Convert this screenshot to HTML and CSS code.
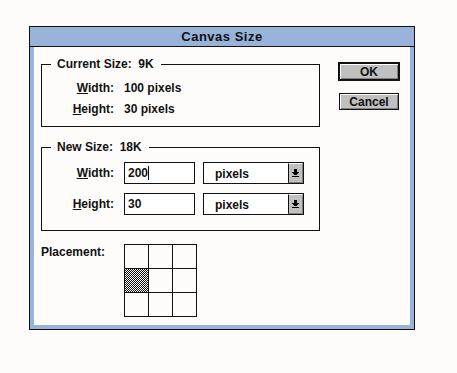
FILE: index.html
```html
<!DOCTYPE html>
<html lang="en">
<head>
    <meta charset="UTF-8">
    <title>Canvas Size</title>
    <link rel="stylesheet" href="styles.css">
</head>
<body>
<div class="window">
    <div class="titlebar">Canvas Size</div>
    <div class="client">
        <div class="left">
            <fieldset class="group current">
                <legend>Current Size:&nbsp;&nbsp;9K</legend>
                <div class="rows">
                    <span class="label"><u>W</u>idth:</span>
                    <span class="value">100 pixels</span>
                    <span class="label"><u>H</u>eight:</span>
                    <span class="value">30 pixels</span>
                </div>
            </fieldset>
            <fieldset class="group newsize">
                <legend>New Size:&nbsp;&nbsp;18K</legend>
                <div class="rows">
                    <span class="label"><u>W</u>idth:</span>
                    <div class="field"><span class="caret">200</span></div>
                    <div class="combo">
                        <span class="combo-text">pixels</span>
                        <span class="combo-btn">
                            <svg width="9" height="9" viewBox="0 0 9 9">
                                <path d="M3 0h3v3h2v1h-1v1h-1v1h-3v-1h-1v-1h-1v-1h2z" fill="#000"/>
                                <rect x="1" y="7" width="7" height="1" fill="#000"/>
                            </svg>
                        </span>
                    </div>
                    <span class="label"><u>H</u>eight:</span>
                    <div class="field">30</div>
                    <div class="combo">
                        <span class="combo-text">pixels</span>
                        <span class="combo-btn">
                            <svg width="9" height="9" viewBox="0 0 9 9">
                                <path d="M3 0h3v3h2v1h-1v1h-1v1h-3v-1h-1v-1h-1v-1h2z" fill="#000"/>
                                <rect x="1" y="7" width="7" height="1" fill="#000"/>
                            </svg>
                        </span>
                    </div>
                </div>
            </fieldset>
            <div class="placement">
                <span class="placement-label">Placement:</span>
                <div class="grid">
                    <div class="cell"></div>
                    <div class="cell"></div>
                    <div class="cell"></div>
                    <div class="cell selected"></div>
                    <div class="cell"></div>
                    <div class="cell"></div>
                    <div class="cell"></div>
                    <div class="cell"></div>
                    <div class="cell"></div>
                </div>
            </div>
        </div>
        <div class="right">
            <button class="btn default">OK</button>
            <button class="btn">Cancel</button>
        </div>
    </div>
</div>
</body>
</html>
```

FILE: styles.css
```css
body {
    margin: 0;
    padding: 26px 0 0 29px;
    background-color: #fdfcfa;
    font-family: "Liberation Sans", Arial, sans-serif;
    font-size: 12px;
    font-weight: bold;
    color: #111;
}
.window {
    width: 386px;
    height: 304px;
    box-sizing: border-box;
    border: 1px solid #111;
    background-color: #98b2d9;
    display: flex;
    flex-direction: column;
}
.titlebar {
    height: 19px;
    line-height: 19px;
    border-bottom: 1px solid #111;
    text-align: center;
    font-size: 13px;
    letter-spacing: 0.5px;
}
.client {
    flex: 1;
    margin: 0 4px 4px 4px;
    background-color: #fdfcfa;
    display: flex;
}
.left {
    padding: 10px 0 0 7px;
    width: 279px;
}
.group {
    margin: 0;
    padding: 0;
    border: 1px solid #111;
    min-width: 0;
}
.group legend {
    margin-left: 9px;
    padding: 0 7px 0 6px;
    line-height: 14px;
}
.rows {
    display: grid;
    grid-template-columns: 72px auto auto;
    column-gap: 10px;
    align-items: center;
    justify-items: start;
}
.label {
    justify-self: end;
}
.current .rows {
    grid-template-columns: 72px auto;
    row-gap: 5px;
    padding: 9px 0 9px 0;
}
.current .rows span {
    line-height: 16px;
}
.newsize {
    margin-top: 13px;
}
.newsize .rows {
    grid-template-columns: 72px 71px 101px;
    row-gap: 9px;
    padding: 8px 0 15px 0;
}
.field {
    width: 71px;
    height: 22px;
    box-sizing: border-box;
    border: 1px solid #111;
    background-color: #fff;
    padding: 0 0 0 3px;
    line-height: 20px;
}
.caret {
    border-right: 1px solid #111;
}
.combo {
    margin-left: -2px;
    width: 101px;
    height: 22px;
    box-sizing: border-box;
    border: 1px solid #111;
    background-color: #fff;
    display: flex;
}
.combo-text {
    flex: 1;
    padding-left: 11px;
    line-height: 22px;
}
.combo-btn {
    width: 15px;
    box-sizing: border-box;
    background-color: #c0c0c0;
    border-left: 1px solid #111;
    border-top: 1px solid #fff;
    border-right: 1px solid #808080;
    border-bottom: 1px solid #808080;
    display: flex;
    align-items: center;
    justify-content: center;
}
.placement {
    display: flex;
    margin-top: 13px;
}
.placement-label {
    width: 83px;
    padding-top: 1px;
    line-height: 14px;
}
.grid {
    display: grid;
    grid-template-columns: repeat(3, 23px);
    grid-template-rows: repeat(3, 23px);
    gap: 1px;
    padding: 1px;
    background-color: #111;
}
.cell {
    background-color: #fdfcfa;
}
.cell.selected {
    background: repeating-conic-gradient(#111 0 25%, #fff 0 50%) 0 0 / 2px 2px;
}
.right {
    display: flex;
    flex-direction: column;
    align-items: flex-start;
    padding: 15px 0 0 18px;
}
.btn {
    font-family: "Liberation Sans", Arial, sans-serif;
    font-size: 12px;
    font-weight: bold;
    color: #111;
    width: 60px;
    height: 17px;
    padding: 0;
    margin: 0 0 0 1px;
    background-color: #c0c0c0;
    border: 1px solid #111;
    box-shadow: inset 1px 1px 0 #fff, inset -1px -1px 0 #808080;
    line-height: 14px;
}
.btn.default {
    width: 62px;
    height: 19px;
    margin: 0 0 12px 0;
    border-width: 2px;
}
```
